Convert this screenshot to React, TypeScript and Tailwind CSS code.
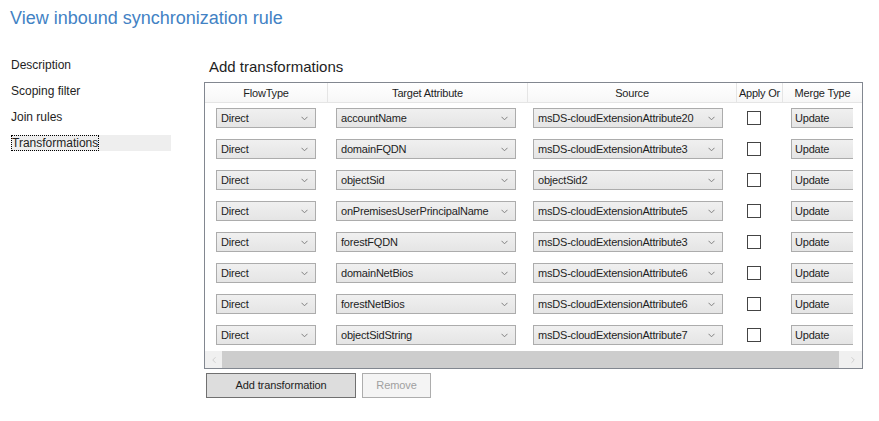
import { ChevronLeft, ChevronRight } from "lucide-react";

const ROWS = [
  { flow: "Direct", target: "accountName", source: "msDS-cloudExtensionAttribute20" },
  { flow: "Direct", target: "domainFQDN", source: "msDS-cloudExtensionAttribute3" },
  { flow: "Direct", target: "objectSid", source: "objectSid2" },
  { flow: "Direct", target: "onPremisesUserPrincipalName", source: "msDS-cloudExtensionAttribute5" },
  { flow: "Direct", target: "forestFQDN", source: "msDS-cloudExtensionAttribute3" },
  { flow: "Direct", target: "domainNetBios", source: "msDS-cloudExtensionAttribute6" },
  { flow: "Direct", target: "forestNetBios", source: "msDS-cloudExtensionAttribute6" },
  { flow: "Direct", target: "objectSidString", source: "msDS-cloudExtensionAttribute7" },
];

const NAV = ["Description", "Scoping filter", "Join rules", "Transformations"];

function Chevron() {
  return (
    <svg width="7" height="5" viewBox="0 0 7 5" className="shrink-0">
      <path d="M0.5 0.8 L3.5 3.8 L6.5 0.8" fill="none" stroke="#808080" strokeWidth="1" />
    </svg>
  );
}

function Combo({ value, className }: { value: string; className: string }) {
  return (
    <div
      className={`h-[20px] flex items-center justify-between pl-[4px] pr-[7px] border border-[#acacac] bg-gradient-to-b from-[#f0f0f0] to-[#e5e5e5] text-[#1e1e1e] ${className}`}
    >
      <span className="whitespace-nowrap">{value}</span>
      <Chevron />
    </div>
  );
}

export default function App() {
  return (
    <div className="w-[879px] h-[421px] bg-white overflow-hidden font-['Liberation_Sans',Arial,sans-serif] text-[#1e1e1e]">
      <h1 className="pl-[10px] pt-[5px] text-[18px] leading-[26px] text-[#4282c4]">
        View inbound synchronization rule
      </h1>

      <div className="flex mt-[26px]">
        <nav className="ml-[11px] w-[160px] flex flex-col gap-[10px] text-[12px]">
          {NAV.map((item, i) => (
            <div key={item} className={`h-[16px] leading-[16px] ${i === 3 ? "bg-[#eeeeee]" : ""}`}>
              {i === 3 ? (
                <span className="inline-block h-[16px] leading-[14px] border border-dotted border-black">{item}</span>
              ) : (
                item
              )}
            </div>
          ))}
        </nav>

        <main className="ml-[33px] flex flex-col">
          <h2 className="pl-[5px] text-[15px] leading-[20px] h-[25px]">Add transformations</h2>

          <div className="w-[659px] border border-[#828790] overflow-hidden text-[11px] tracking-[-0.2px]">
            <div className="flex h-[20px] border-b border-[#e5e5e5] bg-gradient-to-b from-white to-[#f7f7f7] leading-[20px] whitespace-nowrap">
              <div className="w-[123px] shrink-0 text-center border-r border-[#e5e5e5]">FlowType</div>
              <div className="w-[200px] shrink-0 text-center border-r border-[#e5e5e5]">Target Attribute</div>
              <div className="w-[209px] shrink-0 text-center border-r border-[#e5e5e5]">Source</div>
              <div className="w-[46px] shrink-0 text-center border-r border-[#e5e5e5] overflow-hidden">Apply Or</div>
              <div className="w-[79px] shrink-0 text-center">Merge Type</div>
            </div>

            {ROWS.map((row, i) => (
              <div key={i} className="flex items-start h-[31px] pt-[5px]">
                <div className="w-[123px] shrink-0 pl-[11px]">
                  <Combo value={row.flow} className="w-[100px]" />
                </div>
                <div className="w-[200px] shrink-0 pl-[8px]">
                  <Combo value={row.target} className="w-[180px]" />
                </div>
                <div className="w-[209px] shrink-0 pl-[5px]">
                  <Combo value={row.source} className="w-[190px]" />
                </div>
                <div className="w-[46px] shrink-0 pl-[10px] pt-[3px]">
                  <div className="w-[14px] h-[14px] border border-[#444444] bg-white" />
                </div>
                <div className="w-[79px] shrink-0 pl-[8px]">
                  <div className="w-[62px] h-[20px] border border-r-0 border-[#acacac] bg-gradient-to-b from-[#f0f0f0] to-[#e5e5e5] pl-[3px] leading-[18px]">
                    Update
                  </div>
                </div>
              </div>
            ))}

            <div className="flex h-[17px] bg-[#f0f0f0]">
              <div className="w-[17px] flex items-center justify-center">
                <ChevronLeft size={10} strokeWidth={1.25} color="#b0b0b0" />
              </div>
              <div className="w-[617px] bg-[#cdcdcd]" />
              <div className="flex-1 flex items-center justify-end pr-[4px]">
                <ChevronRight size={10} strokeWidth={1.25} color="#b0b0b0" />
              </div>
            </div>
          </div>

          <div className="flex gap-[6px] mt-[4px] ml-[2px] text-[11px] tracking-[-0.1px]">
            <button className="w-[150px] h-[25px] border border-[#707070] bg-[#dddddd] text-[#1e1e1e]">
              Add transformation
            </button>
            <button className="w-[69px] h-[25px] border border-[#adadad] bg-[#f4f4f4] text-[#a0a0a0]">
              Remove
            </button>
          </div>
        </main>
      </div>
    </div>
  );
}
